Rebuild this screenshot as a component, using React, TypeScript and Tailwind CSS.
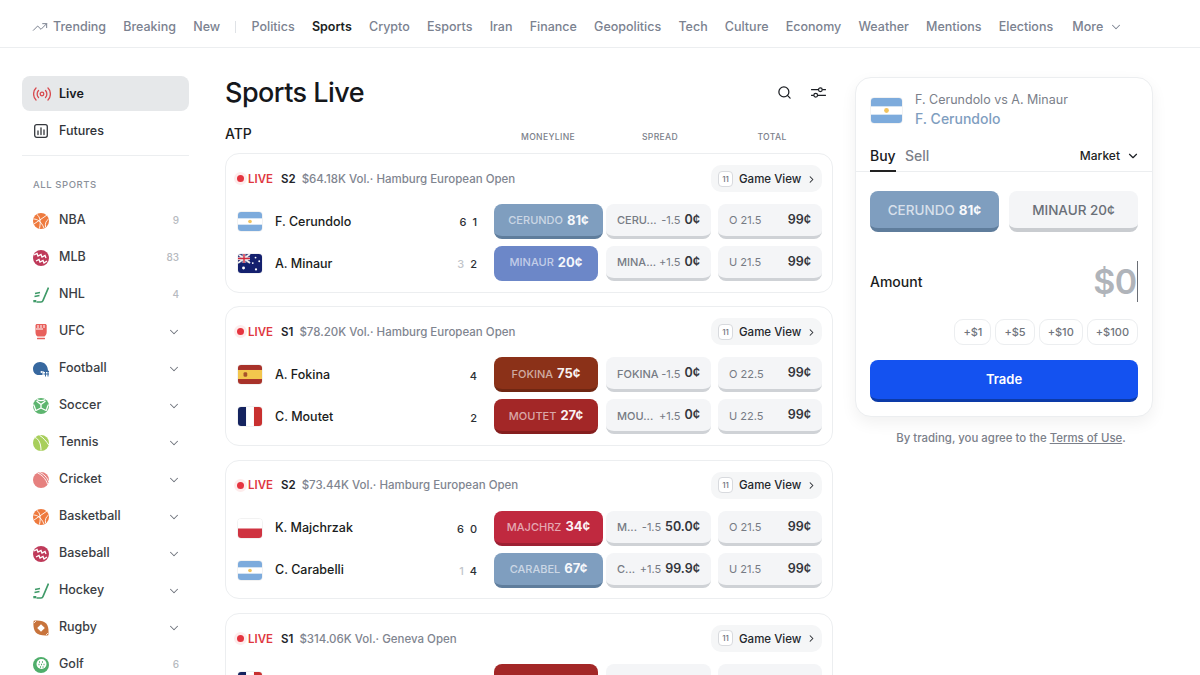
import { ChevronDown, ChevronRight, Search, TrendingUp } from 'lucide-react';
import type { ReactNode } from 'react';

function Flag({ code, className }: { code: string; className: string }) {
  let body: ReactNode = null;
  if (code === 'ar') {
    body = (
      <>
        <rect width="26" height="21" fill="#fff" />
        <rect width="26" height="7" fill="#7dabdc" />
        <rect y="14" width="26" height="7" fill="#7dabdc" />
        <circle cx="13" cy="10.5" r="2" fill="#f2c45f" />
      </>
    );
  } else if (code === 'au') {
    body = (
      <>
        <rect width="26" height="21" fill="#14206e" />
        <rect width="13" height="10" fill="#3a3f80" />
        <path d="M0 0L13 10M13 0L0 10" stroke="#eee" strokeWidth="2" />
        <path d="M6.5 0V10M0 5H13" stroke="#eee" strokeWidth="3" />
        <path d="M6.5 0V10M0 5H13" stroke="#d0283c" strokeWidth="1.5" />
        <circle cx="6" cy="15.5" r="1.6" fill="#fff" />
        <circle cx="19" cy="4" r="1" fill="#fff" />
        <circle cx="23" cy="8" r="1" fill="#fff" />
        <circle cx="16" cy="10" r="1" fill="#fff" />
        <circle cx="19.5" cy="17" r="1.2" fill="#fff" />
      </>
    );
  } else if (code === 'es') {
    body = (
      <>
        <rect width="26" height="21" fill="#a8322a" />
        <rect y="5.5" width="26" height="10" fill="#f3c64d" />
        <rect x="6" y="8" width="4" height="5" rx="1.5" fill="#a8522a" />
      </>
    );
  } else if (code === 'fr') {
    body = (
      <>
        <rect width="26" height="21" fill="#fff" />
        <rect width="8.7" height="21" fill="#14235f" />
        <rect x="17.3" width="8.7" height="21" fill="#c8302f" />
      </>
    );
  } else if (code === 'pl') {
    body = (
      <>
        <rect width="26" height="21" fill="#fff" />
        <rect y="10.5" width="26" height="10.5" fill="#cf3341" />
      </>
    );
  }
  return (
    <svg viewBox="0 0 26 21" preserveAspectRatio="none" className={`${className} rounded-[4px] shrink-0 border border-black/5`}>
      {body}
    </svg>
  );
}

function SportIcon({ kind }: { kind: string }) {
  const wrap = (children: ReactNode) => (
    <svg viewBox="0 0 16 16" className="w-4 h-4 shrink-0">
      {children}
    </svg>
  );
  switch (kind) {
    case 'basketball':
      return wrap(
        <>
          <circle cx="8" cy="8" r="8" fill="#ee7a3e" />
          <path d="M1 11L14 2M4 1.5C7 4 8 8 6.5 15.5M0.5 6C4 6 8 8 11 15M15.5 6C13 8 12 10 12.5 14" stroke="#fff" strokeWidth="0.9" fill="none" />
        </>,
      );
    case 'baseball':
      return wrap(
        <>
          <circle cx="8" cy="8" r="8" fill="#bf3a5a" />
          <path d="M1 5L4 3.5L5 6L8 4.5L9 7L12 5.5L13 8M3 11L6 9.5L7 12L10 10.5L11 13L14 11" stroke="#fff" strokeWidth="1.3" fill="none" />
        </>,
      );
    case 'hockey':
      return wrap(
        <>
          <path d="M15.5 0.5L10 13.5C9.7 14.5 9 15 8 15H3.5" stroke="#3f9a68" strokeWidth="1.7" fill="none" />
          <path d="M2 6.5L7 5.5M1.5 9.5L6.5 8.5" stroke="#3f9a68" strokeWidth="1.5" />
          <rect x="0.3" y="13" width="3" height="2.3" fill="#3f9a68" />
        </>,
      );
    case 'ufc':
      return wrap(
        <>
          <path d="M2.5 1.5C2.5 0.6 3.2 0 4 0H12C13 0 13.7 0.6 13.7 1.5V8C13.7 10 12.5 12 11.5 12.5H4.5C3 12 2.5 10 2.5 8Z" fill="#e8605c" />
          <path d="M5 1V4M8 1V4M11 1V4M3 5H10" stroke="#fff" strokeWidth="1" />
          <rect x="4" y="13.7" width="8" height="1.6" rx="0.5" fill="#e8605c" />
        </>,
      );
    case 'football':
      return wrap(
        <>
          <path d="M7 1C3 1 0 4 0 8C0 11 2 13.5 4.5 14H9.5V10H15C15 5 12 1 7 1Z" fill="#37689f" />
          <circle cx="8.5" cy="11" r="1" fill="#fff" />
          <path d="M10.5 10.5H16M10.5 13H16M12.5 9.5V15.5M15 9.5V15.5" stroke="#37689f" strokeWidth="1" fill="none" />
        </>,
      );
    case 'soccer':
      return wrap(
        <>
          <circle cx="8" cy="8" r="8" fill="#5db56f" />
          <path d="M8 6.5L3.5 3M8 6.5L12.5 3M8 6.5V10M8 10L3 12.5M8 10L13 12.5M4 1.5C6 3 10 3 12 1.5M0.5 6.5C2 9 2 11 3 13M15.5 6.5C14 9 14 11 13 13" stroke="#fff" strokeWidth="1.3" fill="none" />
        </>,
      );
    case 'tennis':
      return wrap(
        <>
          <circle cx="8" cy="8" r="8" fill="#a8cf5c" />
          <path d="M2 2.5C6 4 8 9 8 15.5M6.5 0.3C10 2.5 14 7 15.7 10" stroke="#fff" strokeWidth="1" fill="none" />
        </>,
      );
    case 'cricket':
      return wrap(
        <>
          <circle cx="8" cy="8" r="8" fill="#e6817f" />
          <path d="M4.5 1C8.5 2.5 13 7 14.5 12M6.5 0.3C10 1.5 14.5 5.5 15.7 10" stroke="#fff" strokeWidth="0.9" fill="none" />
        </>,
      );
    case 'rugby':
      return wrap(
        <>
          <path d="M0.7 0.7C6 -0.2 11 1.2 13.2 3.5C15.3 6 16 10.5 15.3 15.3C10 16 5 14.8 2.8 12.5C0.6 10 0 5.5 0.7 0.7Z" fill="#c8743c" />
          <path d="M8 4.2L11.8 8L8 11.8L4.2 8Z" fill="#fff" />
          <path d="M3 1L1 3M15 13L13 15" stroke="#fff" strokeWidth="0.8" />
        </>,
      );
    default:
      return wrap(
        <>
          <circle cx="8" cy="8" r="8" fill="#4fae6b" />
          <circle cx="8.5" cy="7" r="5" fill="#fff" />
          <path d="M6 5H7M9 5H10M5.5 7.5H6.5M8 7.5H9M10.5 7.5H11.5M7 10H8M9.5 10H10.5" stroke="#4fae6b" strokeWidth="1.3" />
        </>,
      );
  }
}

const sports = [
  { name: 'NBA', icon: 'basketball', count: '9' },
  { name: 'MLB', icon: 'baseball', count: '83' },
  { name: 'NHL', icon: 'hockey', count: '4' },
  { name: 'UFC', icon: 'ufc' },
  { name: 'Football', icon: 'football' },
  { name: 'Soccer', icon: 'soccer' },
  { name: 'Tennis', icon: 'tennis' },
  { name: 'Cricket', icon: 'cricket' },
  { name: 'Basketball', icon: 'basketball' },
  { name: 'Baseball', icon: 'baseball' },
  { name: 'Hockey', icon: 'hockey' },
  { name: 'Rugby', icon: 'rugby' },
  { name: 'Golf', icon: 'golf', count: '6' },
];

const navItems = ['Politics', 'Sports', 'Crypto', 'Esports', 'Iran', 'Finance', 'Geopolitics', 'Tech', 'Culture', 'Economy', 'Weather', 'Mentions', 'Elections'];

function Nav() {
  return (
    <nav className="h-12 shrink-0 border-b border-[#eceef0] flex items-center pt-[7px] pl-8 gap-[17.2px] text-[12.5px] font-medium text-[#7b8290] whitespace-nowrap">
      <span className="flex items-center gap-[5px]">
        <TrendingUp className="w-4 h-4" strokeWidth={1.5} />
        Trending
      </span>
      <span>Breaking</span>
      <span>New</span>
      <span className="w-px h-3 bg-[#dfe2e6] mx-[-2px]" />
      {navItems.map((item) => (
        <span key={item} className={item === 'Sports' ? 'text-[#1c1f24] font-semibold' : ''}>
          {item}
        </span>
      ))}
      <span className="flex items-center gap-1.5 ml-0.5">
        More
        <ChevronDown className="w-3.5 h-3.5" strokeWidth={1.75} />
      </span>
    </nav>
  );
}

function Sidebar() {
  return (
    <aside className="w-[167px] shrink-0 mr-9">
      <div className="h-[35px] pt-[1px] rounded-lg bg-[#e6e8ea] flex items-center pl-[11px] gap-[8px] text-[12.5px] font-semibold text-[#17191d]">
        <svg viewBox="0 0 18 14" className="w-[18px] h-[14px]" fill="none" stroke="#d84a4f" strokeWidth="1.3" strokeLinecap="round">
          <circle cx="9" cy="7" r="1.8" />
          <path d="M5.5 3.5C3.7 5.4 3.7 8.6 5.5 10.5M12.5 3.5C14.3 5.4 14.3 8.6 12.5 10.5M3 1C-0.2 4 -0.2 10 3 13M15 1C18.2 4 18.2 10 15 13" />
        </svg>
        Live
      </div>
      <div className="h-[38px] mt-[1px] flex items-center pl-3 gap-[11px] text-[12.5px] font-medium text-[#2f3238]">
        <svg viewBox="0 0 14 14" className="w-3.5 h-3.5" fill="none" stroke="#34373c" strokeWidth="1.3" strokeLinecap="round">
          <rect x="0.7" y="0.7" width="12.6" height="12.6" rx="2" />
          <path d="M4 10.5V7M7 10.5V3.8M10 10.5V6" />
        </svg>
        Futures
      </div>
      <div className="h-px bg-[#eceef0] mt-[5px]" />
      <div className="mt-[22px] pl-[11px] text-[9.5px] font-medium tracking-[0.06em] text-[#8b919b]">ALL SPORTS</div>
      <div className="mt-[10px]">
        {sports.map((s) => (
          <div key={s.name} className="h-[37px] flex items-center pl-[11px] pr-[10px] gap-[10px] text-[12.5px] font-medium text-[#3a3d43]">
            <SportIcon kind={s.icon} />
            <span className="flex-1">{s.name}</span>
            {s.count ? (
              <span className="text-[10px] text-[#b6bac0]">{s.count}</span>
            ) : (
              <ChevronDown className="w-3.5 h-3.5 text-[#6d727b] mr-[-2px]" strokeWidth={1.75} />
            )}
          </div>
        ))}
      </div>
    </aside>
  );
}

type Runner = {
  flag: string;
  name: string;
  scores: { v: string; dim?: boolean }[];
  ml: string;
  price: string;
  mlBg: string;
  mlEdge: string;
  wide?: boolean;
  sp: string;
  line: string;
  spPrice: string;
  total: string;
};

function SideBtn({ children, className }: { children: ReactNode; className: string }) {
  return <div className={`h-[35px] pt-[1px] rounded-lg flex items-center border-b-[3px] ${className}`}>{children}</div>;
}

function Row({ r }: { r: Runner }) {
  return (
    <div className="flex items-center h-[35px]">
      <Flag code={r.flag} className="w-[26px] h-[21px]" />
      <span className="ml-3 flex-1 text-[12.5px] font-medium text-[#1a1c20] mt-[1px]">{r.name}</span>
      <span className="flex gap-[6px] text-[11px] font-medium text-[#2c2f34] mt-[2px]">
        {r.scores.map((s, i) => (
          <span key={i} className={s.dim ? 'text-[#c2c5ca]' : ''}>
            {s.v}
          </span>
        ))}
      </span>
      <div className="w-[112px] ml-[17px] shrink-0">
        <SideBtn className={`${r.wide ? 'w-[109px]' : 'w-[104px]'} justify-center gap-1 ${r.mlBg} ${r.mlEdge}`}>
          <span className="text-[11px] font-medium text-white/60">{r.ml}</span>
          <span className="text-[13px] font-bold text-white/95">{r.price}</span>
        </SideBtn>
      </div>
      <SideBtn className="w-[105px] bg-[#f4f5f7] border-[#cfd2d6] pl-[11px] pr-[11px] shrink-0">
        <span className="flex-1 text-[11px] font-medium text-[#767b84] truncate">{r.sp}</span>
        <span className="text-[11px] text-[#767b84] mr-1">{r.line}</span>
        <span className="text-[12.5px] font-semibold text-[#33363b]">{r.spPrice}</span>
      </SideBtn>
      <SideBtn className="w-[104px] ml-[7px] bg-[#f4f5f7] border-[#cfd2d6] pl-[11px] pr-[11px] shrink-0">
        <span className="flex-1 text-[11px] text-[#767b84]">{r.total}</span>
        {r.total && <span className="text-[12.5px] font-semibold text-[#33363b]">99¢</span>}
      </SideBtn>
    </div>
  );
}

function Card({ set, vol, runners }: { set: string; vol: string; runners: Runner[] }) {
  return (
    <div className="h-[139.5px] rounded-[14px] border border-[#eceef0] pl-[11px] pr-[10px] pt-[11px] mb-[13.8px] shrink-0">
      <div className="flex items-center h-[27px] text-[11.5px]">
        <span className="w-[7px] h-[7px] rounded-full bg-[#e5343f] ring-[3px] ring-[#fdecec] mr-[4px]" />
        <span className="font-semibold text-[#e0383f] mt-[2px]">LIVE</span>
        <span className="font-semibold text-[#22252a] ml-[8px] mt-[2px]">{set}</span>
        <span className="text-[#7f8590] font-medium ml-[6px] flex-1 mt-[2px]">{vol}</span>
        <span className="h-[27px] w-[111px] pt-[2px] rounded-[10px] bg-[#f5f6f7] flex items-center pl-[7px] gap-[6px] text-[11.5px] font-medium text-[#24272c] whitespace-nowrap">
          <span className="w-[15px] h-[16px] mt-[-2px] rounded-[4px] border border-[#d8dade] bg-white text-[8px] text-[#6f747c] flex items-center justify-center">11</span>
          Game View
          <ChevronRight className="w-[11px] h-[11px] ml-[-1px] mt-[-1px]" strokeWidth={2.25} />
        </span>
      </div>
      <div className="mt-[12px] flex flex-col gap-[7px]">
        {runners.map((r) => (
          <Row key={r.name} r={r} />
        ))}
      </div>
    </div>
  );
}

const steel = { mlBg: 'bg-[#7f9ebf]', mlEdge: 'border-[#5f7d9c]' };

const cards = [
  {
    set: 'S2',
    vol: '$64.18K Vol.· Hamburg European Open',
    runners: [
      { flag: 'ar', name: 'F. Cerundolo', scores: [{ v: '6' }, { v: '1' }], ml: 'CERUNDO', price: '81¢', ...steel, wide: true, sp: 'CERU...', line: '-1.5', spPrice: '0¢', total: 'O 21.5' },
      { flag: 'au', name: 'A. Minaur', scores: [{ v: '3', dim: true }, { v: '2' }], ml: 'MINAUR', price: '20¢', mlBg: 'bg-[#6c87c8]', mlEdge: 'border-[#6c87c8]', sp: 'MINA...', line: '+1.5', spPrice: '0¢', total: 'U 21.5' },
    ],
  },
  {
    set: 'S1',
    vol: '$78.20K Vol.· Hamburg European Open',
    runners: [
      { flag: 'es', name: 'A. Fokina', scores: [{ v: '4' }], ml: 'FOKINA', price: '75¢', mlBg: 'bg-[#8b3118]', mlEdge: 'border-[#6f2612]', sp: 'FOKINA', line: '-1.5', spPrice: '0¢', total: 'O 22.5' },
      { flag: 'fr', name: 'C. Moutet', scores: [{ v: '2' }], ml: 'MOUTET', price: '27¢', mlBg: 'bg-[#a32727]', mlEdge: 'border-[#851e1e]', sp: 'MOU...', line: '+1.5', spPrice: '0¢', total: 'U 22.5' },
    ],
  },
  {
    set: 'S2',
    vol: '$73.44K Vol.· Hamburg European Open',
    runners: [
      { flag: 'pl', name: 'K. Majchrzak', scores: [{ v: '6' }, { v: '0' }], ml: 'MAJCHRZ', price: '34¢', mlBg: 'bg-[#c0293f]', mlEdge: 'border-[#9d2033]', wide: true, sp: 'M...', line: '-1.5', spPrice: '50.0¢', total: 'O 21.5' },
      { flag: 'ar', name: 'C. Carabelli', scores: [{ v: '1', dim: true }, { v: '4' }], ml: 'CARABEL', price: '67¢', ...steel, wide: true, sp: 'C...', line: '+1.5', spPrice: '99.9¢', total: 'U 21.5' },
    ],
  },
  {
    set: 'S1',
    vol: '$314.06K Vol.· Geneva Open',
    runners: [
      { flag: 'fr', name: '', scores: [], ml: '', price: '', mlBg: 'bg-[#a32727]', mlEdge: 'border-[#851e1e]', sp: '', line: '', spPrice: '', total: '' },
    ],
  },
];

function TradePanel() {
  return (
    <div className="w-[298px] ml-[22px] shrink-0 mt-[1px]">
      <div className="h-[340px] rounded-[16px] border border-[#eceef0] bg-white shadow-[0_6px_16px_rgba(0,0,0,0.06)]">
        <div className="flex items-center pl-[14px] pt-[13px]">
          <Flag code="ar" className="w-[33px] h-[27px]" />
          <div className="ml-3 mt-[1px]">
            <div className="text-[12.5px] leading-[16px] text-[#7b808a]">F. Cerundolo vs A. Minaur</div>
            <div className="text-[14px] leading-[20px] mt-[1px] font-medium text-[#7f9ebf]">F. Cerundolo</div>
          </div>
        </div>
        <div className="mt-[10px] h-[33px] border-b border-[#eceef0] flex items-start px-[14px] text-[14px]">
          <span className="h-[33px] w-[26px] font-medium leading-[34px] text-[#17191d] border-b-2 border-[#222] whitespace-nowrap">Buy</span>
          <span className="ml-[9px] leading-[34px] font-medium text-[#7b808a]">Sell</span>
          <span className="flex-1" />
          <span className="flex items-center h-[34px] text-[12px] font-medium text-[#1c1f24] mr-[-2px]">
            Market
            <ChevronDown className="w-3.5 h-3.5 ml-[6px]" strokeWidth={2} />
          </span>
        </div>
        <div className="mt-[19px] px-[14px] flex gap-[10px] text-[13.5px] font-medium">
          <div className="h-[41px] pt-[2px] flex-1 rounded-lg bg-[#7f9ebf] border-b-4 border-[#5f7d9c] flex items-center justify-center gap-1">
            <span className="text-white/70">CERUNDO</span>
            <span className="font-bold text-white/95">81¢</span>
          </div>
          <div className="h-[41px] pt-[2px] flex-1 rounded-lg bg-[#f4f5f7] border-b-4 border-[#c9ccd0] flex items-center justify-center text-[#6a6f78]">MINAUR 20¢</div>
        </div>
        <div className="mt-[29px] h-[41px] px-[14px] flex items-center justify-between">
          <span className="text-[14px] font-medium text-[#1a1c20]">Amount</span>
          <span className="flex items-center">
            <span className="text-[34px] font-semibold tracking-[-0.02em] text-[#b0b4ba]">$0</span>
            <span className="w-[1.5px] h-[41px] bg-[#6b6f76]" />
          </span>
        </div>
        <div className="mt-[17px] px-[14px] flex justify-end gap-[4px] text-[11px] font-medium text-[#6f747c]">
          {['+$1', '+$5', '+$10', '+$100'].map((a) => (
            <span key={a} className="h-[26px] px-[8px] rounded-[9px] border border-[#eceef0] flex items-center">
              {a}
            </span>
          ))}
        </div>
        <div className="mt-[15px] mx-[14px] h-[42px] rounded-lg bg-[#1452f0] border-b-[3px] border-[#0c3aa8] flex items-center justify-center text-[13px] font-semibold text-white">Trade</div>
      </div>
      <div className="mt-[13px] pl-[14px] text-center text-[11.4px] font-medium text-[#7b808a]">
        By trading, you agree to the <span className="underline">Terms of Use</span>.
      </div>
    </div>
  );
}

export default function App() {
  return (
    <div className="w-[1200px] h-[675px] overflow-hidden bg-white flex flex-col font-['Inter',sans-serif]">
      <Nav />
      <div className="flex flex-1 min-h-0 pl-[22px] pt-7 overflow-hidden">
        <Sidebar />
        <main className="w-[608px] shrink-0 overflow-hidden">
          <div className="flex items-center justify-between h-[33px]">
            <h1 className="text-[27px] mt-[1px] font-medium tracking-[-0.02em] text-[#15171b]">Sports Live</h1>
            <div className="flex items-center gap-[19px] pr-[7px] text-[#1c1f24]">
              <Search className="w-[15px] h-[15px]" strokeWidth={2} />
              <svg viewBox="0 0 16 14" className="w-[15px] h-[13px]" fill="none" stroke="currentColor" strokeWidth="1.3">
                <path d="M0 4H8M12 4H16M0 10H3M7 10H16" />
                <circle cx="10" cy="4" r="2" />
                <circle cx="5" cy="10" r="2" />
              </svg>
            </div>
          </div>
          <div className="flex items-center mt-[14px] h-[20px]">
            <span className="text-[14px] font-medium text-[#1a1c20] flex-1">ATP</span>
            <span className="flex text-[8.6px] font-medium tracking-[0.04em] text-[#7b808a] text-center mt-[9px] mr-[7px]">
              <span className="w-[112px]">MONEYLINE</span>
              <span className="w-[112px]">SPREAD</span>
              <span className="w-[112px] mr-[-2px]">TOTAL</span>
            </span>
          </div>
          <div className="mt-[10px]">
            {cards.map((c) => (
              <Card key={c.vol} set={c.set} vol={c.vol} runners={c.runners} />
            ))}
          </div>
        </main>
        <TradePanel />
      </div>
    </div>
  );
}
